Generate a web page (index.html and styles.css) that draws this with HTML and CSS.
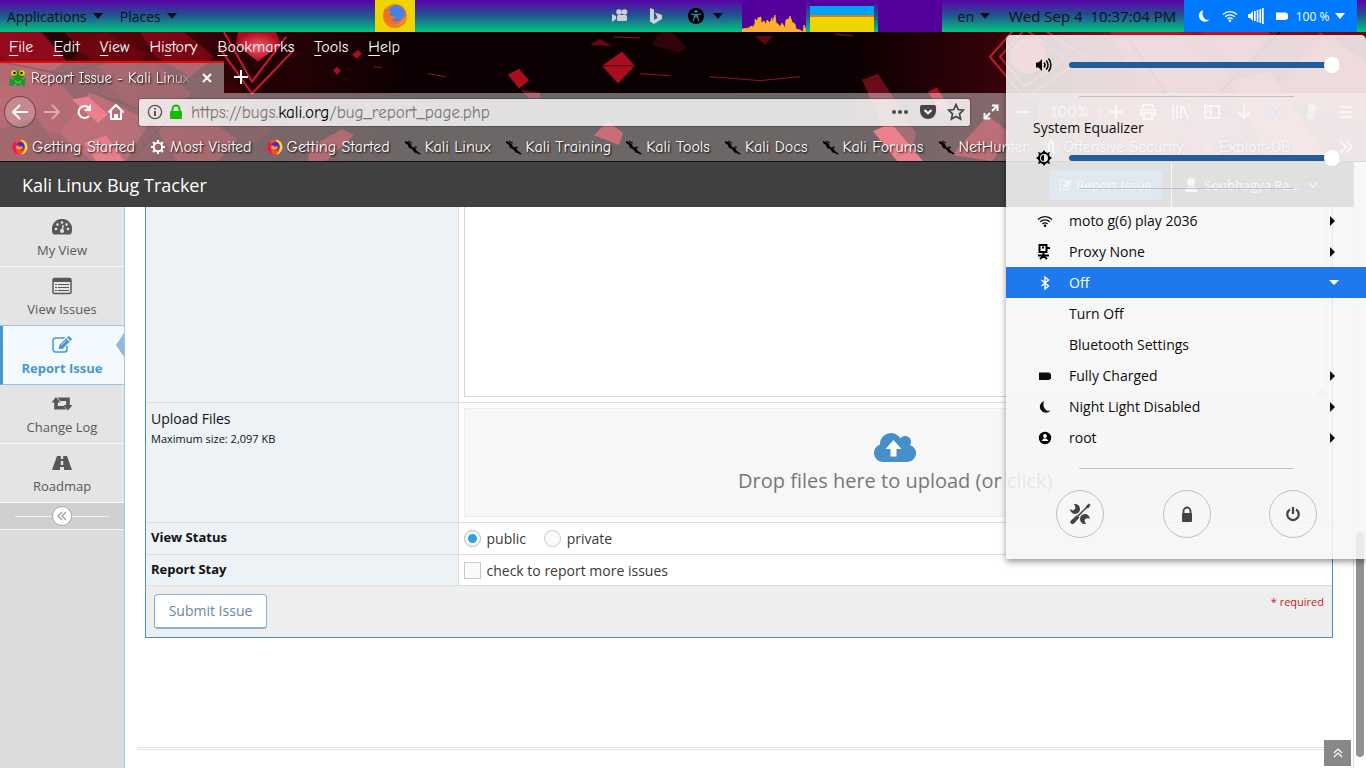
FILE: index.html
```html
<!DOCTYPE html>
<html lang="en">
<head>
  <meta charset="UTF-8" />
  <meta name="viewport" content="width=device-width, initial-scale=1" />
  <title>Report Issue - Kali Linux Bug Tracker</title>
  <link rel="stylesheet" href="styles.css">
</head>
<body>
  <!-- shared icons -->
  <svg class="sprite" aria-hidden="true">
    <symbol id="firefox" viewBox="0 0 16 16">
      <circle cx="8" cy="8" r="7.6" fill="#ff4b1f" />
      <path d="M9 .5a7.6 7.6 0 0 1 6.500 7.500c0 4-3 7-6.500 7.400C13 12 14 8 12 5 11 3 9 3 9 .5z" fill="#ffd43a" />
      <path d="M1 5a7.600 7.600 0 0 0 5 10.400C4 12 3 8 4 4L2.500 2.500z" fill="#f4134f" />
      <circle cx="8.300" cy="7.300" r="4.200" fill="#3b2fd0" />
      <path d="M4 7c2-1 3 0 4 1 1-1 3-1 3 .5C10 11 6 12 4.500 9.500z" fill="#ff9a1a" />
    </symbol>
    <symbol id="dragon" viewBox="0 0 16 16">
      <path d="M0 2l3 1 3 2 1 3 3 1 2 3 4 3-2 .5-3-2-1 .5-3-4-3-1-1-3-3-2z" fill="#000" />
      <path d="M3 2l4 2M9 8l3 .5M5 6l-2 1" stroke="#000" stroke-width="1" />
    </symbol>
    <symbol id="gear" viewBox="0 0 16 16">
      <circle cx="8" cy="8" r="4.200" fill="none" stroke="#fff" stroke-width="2" />
      <path d="M8 1v3M8 12v3M1 8h3M12 8h3M3 3l2 2M11 11l2 2M3 13l2-2M11 5l2-2" stroke="#fff" stroke-width="2" />
    </symbol>
    <symbol id="pencil" viewBox="0 0 20 18">
      <path d="M15 10v3.500a2.500 2.500 0 0 1-2.500 2.500h-9A2.500 2.500 0 0 1 1 13.500v-9A2.500 2.500 0 0 1 3.500 2h9" fill="none" stroke="currentColor" stroke-width="1.500" />
      <path d="M7 13V9.500L14.200 2.300l3.500 3.500L10.500 13z" fill="currentColor" />
      <path d="M15 1.500l1-1a1 1 0 0 1 1.400 0l2.100 2.100a1 1 0 0 1 0 1.400l-1 1z" fill="currentColor" />
      <path d="M9 9.500l5-5" stroke="#fff" stroke-width=".7" />
    </symbol>
    <symbol id="wifi" viewBox="0 0 16 16">
      <g fill="none" stroke="currentColor" stroke-width="1.300">
        <path d="M1 6.500a10 10 0 0 1 14 0" />
        <path d="M3.200 8.800a6.800 6.800 0 0 1 9.600 0" />
        <path d="M5.400 11a3.700 3.700 0 0 1 5.200 0" />
      </g>
      <circle cx="8" cy="12.800" r="1.300" fill="currentColor" />
    </symbol>
    <symbol id="moon" viewBox="0 0 16 16">
      <path d="M7 2a6 6 0 1 0 6.500 9.500C9 13 5 8 7 2z" fill="currentColor" />
    </symbol>
    <symbol id="battery" viewBox="0 0 16 16">
      <path d="M2 4.500h10.500V5.500H14v5.500h-1.500V12H2z" fill="currentColor" />
    </symbol>
  </svg>

  <header class="topbar">
    <button class="top-menu">Applications <i class="caret"></i></button>
    <button class="top-menu">Places <i class="caret"></i></button>
    <button class="launcher" aria-label="Firefox">
      <svg width="26" height="26" viewBox="0 0 26 26">
        <circle cx="13" cy="13" r="12" fill="#f47a1f" />
        <path d="M9 3a11 11 0 0 1 13 15c-3 5-10 6-14 3z" fill="#f7922a" />
        <circle cx="14" cy="11" r="9" fill="#4b7fe0" />
        <path d="M2 6c3 1 5 0 7 3-3 2-1 4 2 4 2 0 3 1 3 2-3 1-5 1-3 3 4 2 9-1 10-5 1 6-5 9-9 9C5 21 1 15 2 6z" fill="#f0702a" />
      </svg>
    </button>
    <div class="tray">
      <svg width="18" height="16" viewBox="0 0 18 16" fill="#cfd0d6">
        <circle cx="8" cy="4" r="2.800" /><circle cx="13.500" cy="4" r="2.800" />
        <rect x="6" y="7" width="10" height="6" rx="1.500" />
        <path d="M1 6l4 2v3l-4 3z" />
      </svg>
      <svg width="14" height="18" viewBox="0 0 14 18" fill="#cfd0d6">
        <path d="M1 1l4 1.500V13l3.500-2L7 7.500 5.800 5.500 13 8v4l-8 5-4-2.500z" />
      </svg>
      <svg class="access" width="16" height="16" viewBox="0 0 16 16">
        <circle cx="8" cy="8" r="8" fill="#000" />
        <circle cx="8" cy="3.500" r="1.500" fill="#3a86a8" />
        <path d="M3 5.800l3.500.7h3l3.500-.7M6.500 6.500V9L5 13.500M9.500 6.500V9l1.500 4.500M7 7h2v2H7z" fill="none" stroke="#3a86a8" stroke-width="1.200" />
      </svg>
      <i class="caret"></i>
    </div>
    <div class="graphs">
      <svg width="64" height="32" viewBox="0 0 64 32">
        <rect width="64" height="32" fill="#54009c" />
        <path d="M0 32v-3l7-1 2-2 2 1 2-3V19l2 2 1-3 3-1v6l3-2 2 4 1-5 3 3 2-5v5l3-8 1 8 2 1 2 3 2-4 3 5 1-8 3-1 1-3 2 6 3 2 1 5 4 1 3 2 1-7 2 5v4z" fill="#ffad33" stroke="#f0d000" stroke-width=".7" />
      </svg>
      <div class="memory"></div>
      <div class="network"></div>
    </div>
    <button class="top-menu lang">en <i class="caret"></i></button>
    <span class="clock">Wed Sep 4 &nbsp;10:37:04 PM</span>
    <button class="status" aria-label="System menu">
      <svg width="16" height="16"><use href="#moon" /></svg>
      <svg width="16" height="16"><use href="#wifi" /></svg>
      <svg width="16" height="16" viewBox="0 0 16 16" fill="#fff">
        <path d="M0 6h2l3-3v10l-3-3H0zM6 3h1.700v10H6zM8.700 2h1.700v12H8.700zM11.400 1h1.700v14h-1.700zM14 0h1.700v16H14z" />
      </svg>
      <svg width="16" height="16"><use href="#battery" /></svg>
      <span>100 %</span>
      <i class="caret"></i>
    </button>
  </header>

  <section class="browser">
    <svg class="wallpaper" viewBox="0 0 1366 130" preserveAspectRatio="none" aria-hidden="true">
      <defs>
        <linearGradient id="night" x1="0" x2="1" y1="0" y2="0">
          <stop offset="0" stop-color="#a3091c" /><stop offset=".1" stop-color="#78040f" />
          <stop offset=".19" stop-color="#2a0206" /><stop offset=".3" stop-color="#0c0002" />
          <stop offset=".62" stop-color="#0a0002" /><stop offset=".73" stop-color="#350309" />
          <stop offset=".85" stop-color="#b01226" /><stop offset="1" stop-color="#6e0511" />
        </linearGradient>
        <linearGradient id="shade" x1="0" x2="1" y1="0" y2="0">
          <stop offset="0" stop-color="#1c0003" stop-opacity=".25" /><stop offset="1" stop-color="#1c0003" stop-opacity=".55" />
        </linearGradient>
        <radialGradient id="lamp"><stop offset="0" stop-color="#ff5a68" /><stop offset="1" stop-color="#a80b20" /></radialGradient>
      </defs>
      <rect width="1366" height="130" fill="url(#night)" />
      <!-- cubes on the left -->
      <path d="M0 0h40l32 34-30 20-42-30z" fill="#bd0e26" />
      <path d="M42 0h22l26 28-16 10z" fill="#2b0207" />
      <path d="M75 10l30-10 42 22-20 24-40-6z" fill="#980817" />
      <path d="M140 0h44l30 25-24 20-34-20z" fill="#c00b21" />
      <path d="M0 55l50-22 40 30-30 40-60-14z" fill="#b50d21" />
      <path d="M50 40l32-20 30 28-28 30z" fill="#6b0510" />
      <path d="M100 48l54-18 38 32-44 28z" fill="#99081a" />
      <path d="M60 102l30-42 60 30-24 40H92z" fill="#ce1830" />
      <path d="M150 86l28-18 60 40-20 22h-42z" fill="#b00d21" />
      <path d="M0 98l36-12 34 44H0z" fill="#7d0512" />
      <path d="M190 62l44-12 40 48-26 18z" fill="#540409" />
      <rect width="290" height="130" fill="url(#shade)" />
      <path d="M72 68l16-3 20 18-10 9z" fill="#e02a40" />
      <path d="M84 112l22-8 18 26h-28z" fill="#d8283e" />
      <path d="M0 30l60 12 50-12M90 60l60 22 70-6M130 130l40-44" stroke="#3a0208" stroke-width="2" fill="none" />
      <path d="M218 14l34 48 42-44M224 0l28 50 34-45" fill="none" stroke="#c81c32" stroke-width="2" />
      <path d="M238 0h38l5 12-23 18-22-18z" fill="url(#lamp)" />
      <!-- loose cubes in the dark -->
      <g fill="#a90d20">
        <path d="M508 43l11-6 10 12-10 8zM602 34l20-14 13 14-17 18z" />
        <path d="M590 13l10-6 12 7z" opacity=".6" /><path d="M520 58l20 3v6h-10z" opacity=".6" />
        <path d="M594 104l14-14 15 12-4 12z" /><path d="M358 18l-6 5 5 4 5-5z" /><path d="M337 35l4 4-4 4-4-4z" />
        <path d="M755 4h18l-8 9z" opacity=".5" /><path d="M660 0l12 0 14 16-8 5-26-8z" opacity=".25" />
        <path d="M310 116l32-18 12 6-28 26h-18z" opacity=".7" />
      </g>
      <path d="M603 34h31" stroke="#3a0208" />
      <path d="M614 5l26 1M640 42l30 2M710 45l50 4 40-4M428 42l18 3M374 35l8 1M835 2l18 2" stroke="#901626" stroke-width="1" fill="none" />
      <!-- cubes on the right -->
      <path d="M862 48l16-6 38 60-6 28h-12z" fill="#6c0c18" />
      <path d="M873 100l18-8 32 38h-26z" fill="#e02c42" />
      <path d="M928 60l9-4 12 20-8 5z" fill="#a30c20" />
      <path d="M990 25l35-40 60 40-60 42zM1000 25l25-28 40 30-40 28z" fill="none" stroke="#c81c32" stroke-width="2" />
      <circle cx="1028" cy="24" r="18" fill="#c41a30" />
      <path d="M952 124l36-40 24 20-20 26z" fill="#900e20" />
      <path d="M1110 0h70l50 46-34 38-70-54zM1200 0h70l-30 40zM1270 66l50-66 46 30v60zM1090 80l50-20 40 60h-50z" fill="#bc142a" />
      <path d="M1230 50l40 80h60l-60-90z" fill="#c82238" />
      <path d="M1130 10l60 84M1280 0l-60 60M1160 60l90 30" stroke="#4a020b" stroke-width="2" />
    </svg>

    <nav class="menubar">
      <button><u>F</u>ile</button>
      <button><u>E</u>dit</button>
      <button><u>V</u>iew</button>
      <button>Hi<u>s</u>tory</button>
      <button><u>B</u>ookmarks</button>
      <button><u>T</u>ools</button>
      <button><u>H</u>elp</button>
    </nav>

    <div class="tabs">
      <div class="tab">
        <svg width="18" height="18" viewBox="0 0 18 18">
          <path d="M1 9l3 2 2-2h6l2 2 3-3-1 9h-3l-1-3-2 3H8l-2-3-2 3H0z" fill="#169b32" />
          <path d="M4 2l10 0 1 6-5 3H7L3 7z" fill="#238c22" />
          <circle cx="5" cy="4" r="2.800" fill="#e6d81c" /><circle cx="13" cy="4" r="2.800" fill="#e6d81c" />
          <circle cx="5.500" cy="4" r="1.200" /><circle cx="12.500" cy="4" r="1.200" />
          <path d="M6 12l3 2 3-2" stroke="#8be04a" fill="none" />
        </svg>
        <span class="tab-title">Report Issue - Kali Linux</span>
        <button class="close" aria-label="Close tab">
          <svg width="12" height="12" viewBox="0 0 12 12"><path d="M2 2l8 8M10 2l-8 8" stroke="#fff" stroke-width="2" /></svg>
        </button>
      </div>
      <button class="new-tab" aria-label="New tab">
        <svg width="14" height="14" viewBox="0 0 14 14"><path d="M7 0v14M0 7h14" stroke="#fff" stroke-width="2" /></svg>
      </button>
    </div>

    <div class="navbar">
      <button class="back" aria-label="Back">
        <svg width="18" height="18" viewBox="0 0 18 18"><path d="M17 9H2M9 2L2 9l7 7" /></svg>
      </button>
      <button class="tool faded" aria-label="Forward">
        <svg width="18" height="18" viewBox="0 0 18 18"><path d="M1 9h15M9 2l7 7-7 7" /></svg>
      </button>
      <button class="tool" aria-label="Reload">
        <svg width="18" height="18" viewBox="0 0 18 18"><path d="M14 13a6 6 0 1 1-1-9" /><path d="M16 1v7H9z" fill="#fff" stroke="none" /></svg>
      </button>
      <button class="tool" aria-label="Home">
        <svg width="18" height="18" viewBox="0 0 18 18"><path d="M1.500 9.500L9 2l7.500 7.500M4 8v8h4v-4h2v4h4V8" /></svg>
      </button>
      <div class="urlbar">
        <svg width="16" height="16" viewBox="0 0 16 16" fill="none" stroke="#555" stroke-width="1.300"><circle cx="8" cy="8" r="6.600" /><path d="M8 7v5M8 4v1.600" stroke-width="2" /></svg>
        <svg width="14" height="16" viewBox="0 0 14 16"><path d="M3.500 8V5a3.500 3.500 0 0 1 7 0v3" fill="none" stroke="#12bc00" stroke-width="2" /><rect x="1" y="7" width="12" height="8" rx="1" fill="#12bc00" /></svg>
        <div class="url">https://bugs.<b>kali.org</b>/bug_report_page.php</div>
        <svg width="18" height="18" viewBox="0 0 18 18" fill="#4a4a4a"><circle cx="3" cy="9" r="2" /><circle cx="9" cy="9" r="2" /><circle cx="15" cy="9" r="2" /></svg>
        <svg width="16" height="16" viewBox="0 0 16 16"><path d="M2 1h12a2 2 0 0 1 2 2v4a8 8 0 0 1-16 0V3a2 2 0 0 1 2-2z" fill="#4a4346" /><path d="M4.500 6L8 9.300 11.500 6" fill="none" stroke="#fff" stroke-width="2" /></svg>
        <svg width="18" height="18" viewBox="0 0 18 18"><path d="M9 1.500l2.200 5 5.300.6-4 3.700 1.100 5.300L9 13.400l-4.600 2.700 1.100-5.300-4-3.700 5.300-.6z" fill="none" stroke="#4a4346" stroke-width="1.700" /></svg>
      </div>
      <button class="tool" aria-label="Full screen">
        <svg width="16" height="16" viewBox="0 0 16 16"><path d="M9 7l5-5M9 1.500h5.500V7M7 9l-5 5M1.500 9v5.500H7" /></svg>
      </button>
      <button class="tool" aria-label="Zoom out"><svg width="14" height="14" viewBox="0 0 14 14"><path d="M1 7h12" /></svg></button>
      <button class="zoom-level">100%</button>
      <button class="tool" aria-label="Zoom in"><svg width="14" height="14" viewBox="0 0 14 14"><path d="M7 0v14M0 7h14" /></svg></button>
      <button class="tool" aria-label="Print">
        <svg width="18" height="18" viewBox="0 0 18 18"><path d="M4 5V2h10v3M4 12H2V7h14v5h-2M5 10h8v6H5z" /></svg>
      </button>
      <button class="tool" aria-label="Library">
        <svg width="18" height="18" viewBox="0 0 18 18"><path d="M2 2v14M6 2v14M10 2v14M12 3l5 13" /></svg>
      </button>
      <button class="tool" aria-label="Sidebars">
        <svg width="18" height="18" viewBox="0 0 18 18"><path d="M2 3h14v12H2zM8 3v12M4 6h2M4 9h2" /></svg>
      </button>
      <button class="tool" aria-label="Downloads">
        <svg width="18" height="18" viewBox="0 0 18 18"><path d="M9 2v13M3 9l6 6 6-6" /></svg>
      </button>
      <button class="tool blue" aria-label="Extension">
        <svg width="18" height="18" viewBox="0 0 18 18"><path d="M4 3l9 13M14 3L4 16" /></svg>
      </button>
      <button class="tool" aria-label="Containers">
        <svg width="18" height="18" viewBox="0 0 18 18"><g stroke="none"><circle cx="5" cy="8" r="4" fill="#777" /><circle cx="13" cy="5" r="4" fill="#ddd" /><circle cx="12" cy="12" r="4.500" fill="#ccc" /></g></svg>
      </button>
      <button class="tool app-menu" aria-label="Menu">
        <svg width="14" height="14" viewBox="0 0 14 14"><path d="M1 2h12M1 7h12M1 12h12" /></svg>
      </button>
    </div>

    <div class="bookmarks">
      <a href="#"><svg width="16" height="16"><use href="#firefox" /></svg>Getting Started</a>
      <a href="#"><svg width="16" height="16"><use href="#gear" /></svg>Most Visited</a>
      <a href="#"><svg width="16" height="16"><use href="#firefox" /></svg>Getting Started</a>
      <a href="#"><svg width="16" height="16"><use href="#dragon" /></svg>Kali Linux</a>
      <a href="#"><svg width="16" height="16"><use href="#dragon" /></svg>Kali Training</a>
      <a href="#"><svg width="16" height="16"><use href="#dragon" /></svg>Kali Tools</a>
      <a href="#"><svg width="16" height="16"><use href="#dragon" /></svg>Kali Docs</a>
      <a href="#"><svg width="16" height="16"><use href="#dragon" /></svg>Kali Forums</a>
      <a href="#"><svg width="16" height="16"><use href="#dragon" /></svg>NetHunter</a>
      <a href="#"><svg width="16" height="16" viewBox="0 0 16 16"><rect width="16" height="16" fill="#888" /><path d="M5 15V5l2-4 2 4v10" fill="none" stroke="#fff" stroke-width="2" /></svg>Offensive Security</a>
      <a href="#"><svg width="16" height="16" viewBox="0 0 16 16"><path d="M2 5l8 3 4 5-8-1z" fill="#f39a3a" /></svg>Exploit-DB</a>
      <button class="more" aria-label="More bookmarks"><svg width="14" height="14" viewBox="0 0 14 14"><path d="M1 1l6 6-6 6M7 1l6 6-6 6" fill="none" stroke="#fff" stroke-width="2" /></svg></button>
    </div>
  </section>

  <div class="viewport">
    <div class="page">
      <header class="site-header">
        <a class="brand" href="#">Kali Linux Bug Tracker</a>
        <a class="report-btn" href="#"><svg width="13" height="12"><use href="#pencil" /></svg> Report Issue</a>
        <button class="user">
          <svg width="14" height="14" viewBox="0 0 14 14" fill="#fff"><circle cx="7" cy="4" r="4" /><path d="M1 14c-1-5 2-6 6-5 4-1 7 0 6 5z" /></svg>
          <span>Soubhagya Ra…</span>
          <svg width="10" height="8" viewBox="0 0 10 8"><path d="M1 2l4 4 4-4" fill="none" stroke="#fff" stroke-width="1.500" /></svg>
        </button>
      </header>

      <div class="content">
        <aside class="sidebar">
          <a href="#">
            <svg width="20" height="18" viewBox="0 0 20 18">
              <path d="M10 1a10 10 0 0 0-8.500 15.500h17A10 10 0 0 0 10 1z" fill="currentColor" />
              <g fill="#e4e4e4"><circle cx="4" cy="11" r="1.300" /><circle cx="5.500" cy="6.500" r="1.300" /><circle cx="10" cy="4.500" r="1.300" /><circle cx="14.500" cy="6.500" r="1.300" /><circle cx="16" cy="11" r="1.300" /><circle cx="10" cy="13" r="2" /></g>
              <path d="M10 13l1.200-6" stroke="#e4e4e4" stroke-width="1.400" />
            </svg>
            My View
          </a>
          <a href="#">
            <svg width="20" height="18" viewBox="0 0 20 18">
              <path d="M1 3a1.500 1.500 0 0 1 1.500-1.500h15A1.500 1.500 0 0 1 19 3v12a1.500 1.500 0 0 1-1.500 1.500h-15A1.500 1.500 0 0 1 1 15z" fill="none" stroke="currentColor" stroke-width="1.500" />
              <path d="M1 2h18v3H1z" fill="currentColor" />
              <path d="M3 7.500h2M6 7.500h11M3 10.500h2M6 10.500h11M3 13.500h2M6 13.500h11" stroke="currentColor" stroke-width="1.200" />
            </svg>
            View Issues
          </a>
          <a href="#" class="active">
            <svg width="20" height="18"><use href="#pencil" /></svg>
            Report Issue
          </a>
          <a href="#">
            <svg width="22" height="18" viewBox="0 0 22 18" fill="currentColor">
              <path d="M5 2l4.500 5.500H6.800V11H13l2.500 3.500H3.200v-7H.5z" />
              <path d="M17 15.500L12.500 10h2.700V6H9L6.500 2.500h12.300V10h2.700z" />
            </svg>
            Change Log
          </a>
          <a href="#">
            <svg width="20" height="18" viewBox="0 0 20 18">
              <path d="M5 2h10l5 14h-8v-3H8v3H0z" fill="currentColor" />
              <path d="M10 2v3M10 7v4" stroke="#e4e4e4" stroke-width="2.400" />
            </svg>
            Roadmap
          </a>
          <div class="collapse">
            <button aria-label="Collapse sidebar">
              <svg width="10" height="10" viewBox="0 0 10 10"><path d="M5 1L1 5l4 4M9 1L5 5l4 4" fill="none" stroke="#999" stroke-width="1.200" /></svg>
            </button>
          </div>
        </aside>

        <main>
          <form class="report-form">
            <table>
              <tr class="info-row">
                <th></th>
                <td><textarea aria-label="Additional information"></textarea></td>
              </tr>
              <tr class="upload-row">
                <th><span class="field-name">Upload Files</span><small>Maximum size: 2,097 KB</small></th>
                <td>
                  <div class="dropzone">
                    <svg width="42" height="32" viewBox="0 0 42 32">
                      <path d="M9 31A9 9 0 0 1 6 13.500 11 11 0 0 1 26.500 7.500 5.500 5.500 0 0 1 36 14a8.700 8.700 0 0 1-2.500 17z" fill="#478fca" />
                      <path d="M19.500 9l8 9h-5v7.500h-6V18h-5z" fill="#fff" />
                    </svg>
                    <span>Drop files here to upload (or click)</span>
                  </div>
                </td>
              </tr>
              <tr>
                <th>View Status</th>
                <td>
                  <label><input type="radio" name="view_state" checked /><span>public</span></label>
                  <label><input type="radio" name="view_state" /><span>private</span></label>
                </td>
              </tr>
              <tr>
                <th>Report Stay</th>
                <td><label><input type="checkbox" name="report_stay" /><span>check to report more issues</span></label></td>
              </tr>
            </table>
            <div class="toolbox">
              <button type="submit">Submit Issue</button>
              <span class="required">* required</span>
            </div>
          </form>
          <footer></footer>
          <a class="scroll-up" href="#" aria-label="Back to top">
            <svg width="10" height="10" viewBox="0 0 10 10"><path d="M1 5l4-4 4 4M1 9l4-4 4 4" fill="none" stroke="#fff" stroke-width="1.200" /></svg>
          </a>
        </main>
      </div>
    </div>
    <div class="scrollbar"><div class="thumb"></div></div>
  </div>

  <section class="system-menu">
    <div class="slider volume">
      <svg width="16" height="16" viewBox="0 0 16 16"><path d="M0 5.500h2.500L6 2v12l-3.500-3.500H0z" /><path d="M8 5.500a4 4 0 0 1 0 5M10.200 3.500a6.500 6.500 0 0 1 0 9M12.500 1.500a10 10 0 0 1 0 13" fill="none" stroke="#000" stroke-width="1.500" /></svg>
      <input type="range" value="100" aria-label="Volume" />
    </div>
    <hr />
    <button class="equalizer">System Equalizer</button>
    <div class="slider">
      <svg width="16" height="16" viewBox="0 0 16 16"><circle cx="8" cy="8" r="5" fill="none" stroke="#000" stroke-width="2" /><path d="M8 5a3 3 0 0 0 0 6z" /><path d="M8 0l2 3H6zM8 16l2-3H6zM0 8l3-2v4zM16 8l-3-2v4zM2 2l3 1-2 2zM14 2l-3 1 2 2zM2 14l3-1-2-2zM14 14l-3-1 2-2z" /></svg>
      <input type="range" value="100" aria-label="Brightness" />
    </div>
    <hr />
    <ul>
      <li><button><svg width="16" height="16"><use href="#wifi" /></svg>moto g(6) play 2036<i class="arrow"></i></button></li>
      <li><button><svg width="16" height="16" viewBox="0 0 16 16"><path d="M2.500 1h7v7h-7zM10 4h3M5 3.500h2" fill="none" stroke="#000" stroke-width="2" /><path d="M1 11.500h11M3 15l3.500-3 3.500 3M6.500 8v4" fill="none" stroke="#000" stroke-width="2" /></svg>Proxy None<i class="arrow"></i></button></li>
      <li><button class="selected"><svg width="16" height="16" viewBox="0 0 16 16"><path d="M4.500 5l7 6L8 14V2l3.500 3-7 6" fill="none" stroke="#fff" stroke-width="1.400" /></svg>Off<i class="arrow"></i></button></li>
      <li><button class="sub">Turn Off</button></li>
      <li><button class="sub">Bluetooth Settings</button></li>
      <li><button><svg width="16" height="16"><use href="#battery" /></svg>Fully Charged<i class="arrow"></i></button></li>
      <li><button><svg width="16" height="16"><use href="#moon" /></svg>Night Light Disabled<i class="arrow"></i></button></li>
      <li><button><svg width="16" height="16" viewBox="0 0 16 16"><circle cx="8" cy="8" r="6.200" /><circle cx="8" cy="6" r="1.900" fill="#fff" /><path d="M4.500 11l2-2.500h3l2 2.500z" fill="#fff" /></svg>root<i class="arrow"></i></button></li>
    </ul>
    <hr />
    <div class="actions">
      <button aria-label="Settings">
        <svg width="22" height="22" viewBox="0 0 22 22">
          <path d="M6 6l10 10" stroke="#444" stroke-width="2.500" />
          <path d="M5 1a5 5 0 1 1-4 5l3 1.500L6.500 6 6 3zM21 16a5 5 0 1 0-4 5l-1.500-3 1-2.500 3-.3z" fill="#444" />
          <path d="M10 12L19 3" stroke="#f7f7f7" stroke-width="4" />
          <path d="M9 13L19 3" stroke="#444" stroke-width="1.500" />
          <path d="M2 20.500q-1.500-1.500 0-3L8 12l2.500 2.500-5.500 6q-1.500 1-3 0zM17 3l3-2.500L21.500 2 19.500 5l-2 .5z" fill="#444" />
        </svg>
      </button>
      <button aria-label="Lock">
        <svg width="14" height="16" viewBox="0 0 14 16"><path d="M3.500 8V5a3.500 3.500 0 0 1 7 0v3" fill="none" stroke="#444" stroke-width="1.800" /><rect x="2" y="7" width="10" height="9" rx="1" fill="#444" /></svg>
      </button>
      <button aria-label="Power off">
        <svg width="16" height="16" viewBox="0 0 16 16"><path d="M5 3.500a5.700 5.700 0 1 0 6 0M8 1v7" fill="none" stroke="#444" stroke-width="2.200" /></svg>
      </button>
    </div>
  </section>
</body>
</html>
```
FILE: styles.css
```css
* {
  box-sizing: border-box;
}

body {
  margin: 0;
  height: 100vh;
  display: flex;
  flex-direction: column;
  overflow: hidden;
  position: relative;
  font-family: "Open Sans", "Noto Sans", sans-serif;
  font-size: 14px;
  color: #393939;
  background: #fff;
}

button {
  font: inherit;
  color: inherit;
  background: none;
  border: 0;
  padding: 0;
  cursor: pointer;
}

a {
  color: inherit;
  text-decoration: none;
}

svg {
  display: block;
  flex: none;
}

.sprite {
  position: absolute;
  width: 0;
  height: 0;
}

.caret {
  width: 0;
  height: 0;
  border: 5px solid transparent;
  border-top: 6px solid currentColor;
  border-bottom: 0;
}

/* desktop bar */
.topbar {
  height: 32px;
  flex: none;
  display: flex;
  align-items: center;
  color: #0b1016;
  background: linear-gradient(#5a00a8, #20588e 50%, #00c883);
  white-space: nowrap;
}

.top-menu {
  display: flex;
  align-items: center;
  gap: 6px;
  margin-left: 7px;
  margin-right: 10px;
}

.launcher {
  width: 40px;
  height: 32px;
  margin-left: 188px;
  display: flex;
  align-items: center;
  justify-content: center;
  background: #efd500;
}

.tray {
  display: flex;
  align-items: center;
  margin-left: auto;
  gap: 20px;
}

.tray .access {
  margin-left: 5px;
}

.tray .caret {
  margin-left: -11px;
}

.graphs {
  display: flex;
  gap: 4px;
  margin-left: 19px;
}

.memory,
.network {
  width: 64px;
  height: 32px;
  background: #54009c;
}

.memory {
  background: linear-gradient(#54009c 6px, #00a2ff 6px, #00a2ff 15px, #e07818 15px, #e07818 17px, #efd500 17px);
}

.lang {
  margin-left: 16px;
  margin-right: 19px;
}

.clock {
  width: 167px;
  font-size: 15px;
}

.status {
  height: 32px;
  width: 173px;
  margin: 0 9px 0 8px;
  display: flex;
  align-items: center;
  justify-content: center;
  gap: 10px;
  color: #fff;
  font-size: 12px;
  background: #007aff;
}

.status span,
.status .caret {
  margin-left: -4px;
}

/* browser window */
.browser {
  position: relative;
  flex: none;
  height: 130px;
  border-bottom: 1px solid #111;
  color: #fff;
  font-family: "Comic Neue", Lato, "Open Sans", sans-serif;
  font-size: 16px;
  text-shadow: 1px 1px 2px #000;
  overflow: hidden;
}

.wallpaper {
  position: absolute;
  inset: 0;
  width: 100%;
  height: 100%;
}

.menubar,
.tabs,
.navbar,
.bookmarks {
  position: relative;
  display: flex;
  align-items: center;
}

.menubar {
  height: 29px;
  padding-left: 9px;
  gap: 20px;
}

.menubar u {
  text-underline-offset: 3px;
}

.tabs {
  height: 32px;
}

.tab {
  width: 224px;
  height: 32px;
  padding: 0 11px 0 9px;
  display: flex;
  align-items: center;
  gap: 4px;
  border-top: 2px solid #f00;
  background: rgba(255, 255, 255, 0.4);
}

.tab-title {
  flex: 1;
  font-size: 15px;
  overflow: hidden;
  white-space: nowrap;
  -webkit-mask-image: linear-gradient(90deg, #000 80%, transparent);
  mask-image: linear-gradient(90deg, #000 80%, transparent);
}

.new-tab {
  margin-left: 10px;
}

.navbar {
  height: 38px;
  padding: 0 4px;
  background: rgba(255, 255, 255, 0.4);
}

.navbar button svg {
  fill: none;
  stroke: #fff;
  stroke-width: 2;
}

.back {
  width: 32px;
  height: 32px;
  border-radius: 50%;
  border: 1px solid rgba(50, 30, 30, 0.6);
  background: rgba(255, 255, 255, 0.2);
}

.back,
.tool {
  flex: none;
  display: flex;
  align-items: center;
  justify-content: center;
}

.tool {
  width: 32px;
}

.faded {
  opacity: 0.45;
}

.navbar .blue svg {
  stroke: #3584e4;
}

.urlbar {
  flex: 1;
  min-width: 0;
  height: 29px;
  margin: 0 4px 0 6px;
  padding: 0 5px 0 8px;
  display: flex;
  align-items: center;
  gap: 6px;
  border-radius: 3px;
  border: 1px solid rgba(60, 50, 50, 0.4);
  background: rgba(255, 255, 255, 0.8);
  background-clip: padding-box;
  color: #777;
  font-size: 17px;
  text-shadow: none;
}

.urlbar .url {
  flex: 1;
  margin-left: 2px;
}

.urlbar svg:nth-last-child(-n+2) {
  margin-left: 5px;
}

.url b {
  color: #000;
  font-weight: normal;
}

.zoom-level {
  width: 61px;
  border: 1px solid rgba(255, 255, 255, 0.3);
  border-width: 0 1px;
}

.app-menu {
  margin-left: 6px;
}

.bookmarks {
  height: 31px;
  padding-left: 12px;
  gap: 15px;
  white-space: nowrap;
  background: rgba(255, 255, 255, 0.4);
}

.bookmarks a {
  display: flex;
  align-items: center;
  gap: 4px;
}

.bookmarks .more {
  margin-left: auto;
  margin-right: 13px;
}

/* page */
.viewport {
  flex: 1;
  min-height: 0;
  display: flex;
}

.page {
  flex: 1;
  min-width: 0;
  display: flex;
  flex-direction: column;
}

.site-header {
  height: 45px;
  flex: none;
  display: flex;
  align-items: center;
  background: #404040;
  color: #fff;
  font-size: 13px;
}

.brand {
  margin-left: 22px;
  margin-right: auto;
  font-size: 18px;
}

.report-btn {
  width: 113px;
  height: 30px;
  margin-right: 9px;
  display: flex;
  align-items: center;
  justify-content: center;
  gap: 4px;
  border-radius: 4px;
  background: #428bca;
}

.user {
  width: 183px;
  height: 45px;
  padding: 0 12px;
  display: flex;
  align-items: center;
  gap: 6px;
  border-left: 1px solid #fff;
}

.user span {
  flex: 1;
  text-align: left;
}

.user svg:last-child {
  margin-right: 24px;
}

.content {
  flex: 1;
  min-height: 0;
  display: flex;
}

.sidebar {
  width: 125px;
  flex: none;
  background: #dcdcdc;
  border-right: 1px solid #a2c8e2;
  border-top: 1px solid #e8e8e8;
}

.sidebar a {
  position: relative;
  height: 59px;
  padding-top: 10px;
  display: flex;
  flex-direction: column;
  align-items: center;
  font-size: 13px;
  line-height: 24px;
  gap: 2px;
  color: #585858;
  background: #e4e4e4;
  border-bottom: 1px solid #f8f8f8;
}

.sidebar .active {
  color: #4b96cf;
  font-weight: 700;
  background: #f2f9ff;
  border-left: 3px solid #4b96cf;
  border-bottom-color: #9cc4e0;
  padding-right: 3px;
  box-shadow: 0 -1px #9cc4e0;
}

.active::after {
  content: "";
  position: absolute;
  right: 0;
  top: 7px;
  border: 12px solid transparent;
  border-width: 12px 8px 12px 0;
  border-right-color: #8fbbd9;
}

.collapse {
  height: 27px;
  padding: 0 15px;
  display: flex;
  align-items: center;
  background: #d0d0d0;
  border-bottom: 1px solid #f4f4f4;
}

.collapse::before,
.collapse::after {
  content: "";
  flex: 1;
  height: 1px;
  background: #efefef;
}

.collapse button {
  width: 20px;
  height: 20px;
  display: flex;
  align-items: center;
  justify-content: center;
  background: #fff;
  border: 1px solid #aaa;
  border-radius: 50%;
}

main {
  position: relative;
  flex: 1;
  min-width: 0;
  display: flex;
  flex-direction: column;
  padding: 0 12px;
  border-right: 1px solid #ddd;
}

.report-form {
  margin: 0 8px;
  border: 1px solid #478fca;
  border-top: 0;
}

table {
  width: 100%;
  border-collapse: collapse;
  table-layout: fixed;
}

th,
td {
  border-bottom: 1px solid #ddd;
  padding: 0 5px;
  text-align: left;
  height: 32px;
}

th {
  width: 312px;
  color: #111;
  font-size: 13px;
  font-weight: 700;
  line-height: 20px;
  vertical-align: top;
  padding-top: 4px;
  background: #ecf2f5;
  border-right: 1px solid #ddd;
}

tr:last-child th,
tr:last-child td {
  height: 31px;
}

.info-row td {
  height: 195px;
  vertical-align: top;
}

textarea {
  display: block;
  width: 100%;
  height: 190px;
  border: 1px solid #d5d5d5;
  border-top: 0;
}

.upload-row th,
.upload-row td {
  height: 120px;
  padding-top: 5px;
}

.upload-row th {
  padding-top: 6px;
}

.field-name,
small {
  display: block;
  font-weight: normal;
}

.field-name {
  font-size: 14px;
}

small {
  font-size: 11px;
}

.upload-row td {
  vertical-align: top;
}

.dropzone {
  height: 109px;
  display: flex;
  flex-direction: column;
  align-items: center;
  justify-content: center;
  padding-top: 6px;
  border: 1px solid #eee;
  background: #f7f7f7;
  color: #777;
  font-size: 20px;
  line-height: 36px;
}

td label {
  display: inline-flex;
  align-items: center;
  gap: 6px;
  margin-right: 14px;
  vertical-align: middle;
}

input[type="radio"],
input[type="checkbox"] {
  appearance: none;
  width: 17px;
  height: 17px;
  margin: 0;
  border: 1px solid #c8c8c8;
  background: #fafafa;
}

input[type="radio"] {
  border-radius: 50%;
}

input[type="radio"]:checked {
  border-color: #a9bccb;
  background: radial-gradient(circle, #32a3ce 4px, #f5f9fc 5px);
}

.toolbox {
  height: 51px;
  padding: 8px;
  display: flex;
  justify-content: space-between;
  background: #eee;
}

.toolbox button {
  width: 113px;
  height: 35px;
  color: #6688a6;
  background: #fff;
  border: 1px solid #8ab0d2;
  border-bottom-width: 2px;
  border-radius: 4px;
}

.required {
  color: #c11b1b;
  font-size: 11px;
}

footer {
  margin-top: auto;
  height: 21px;
  border-top: 3px double #e2e2e2;
}

.scroll-up {
  position: absolute;
  right: 2px;
  bottom: 2px;
  width: 27px;
  height: 26px;
  display: flex;
  align-items: center;
  justify-content: center;
  background: #888;
}

.scrollbar {
  width: 12px;
  flex: none;
  display: flex;
  flex-direction: column;
  justify-content: flex-end;
  padding: 0 2px 11px;
}

.thumb {
  height: 38%;
  border-radius: 4px;
  background: #929292;
}

/* system menu over the window */
.system-menu {
  position: absolute;
  top: 35px;
  right: 0;
  width: 360px;
  color: #0d0d0d;
  background: rgba(246, 246, 246, 0.88);
  border-radius: 5px 5px 2px 2px;
  box-shadow: 0 3px 6px rgba(0, 0, 0, 0.4);
}

.system-menu hr {
  width: 215px;
  height: 1px;
  margin: 15px auto;
  border: 0;
  background: #c2c0c0;
}

.slider {
  height: 31px;
  padding: 0 26px 0 30px;
  display: flex;
  align-items: center;
  gap: 17px;
}

.slider.volume {
  padding-top: 14px;
  height: 46px;
}

.slider input {
  flex: 1;
  min-width: 0;
  margin: 0;
  appearance: none;
  height: 6px;
  border-radius: 3px;
  background: #215d9c;
}

.slider input::-webkit-slider-thumb {
  appearance: none;
  width: 16px;
  height: 16px;
  border-radius: 50%;
  background: #fff;
}

.equalizer {
  display: block;
  height: 30px;
  padding-left: 27px;
}

.system-menu ul {
  margin: 0;
  padding: 1px 0 0;
  list-style: none;
}

.system-menu li button {
  width: 100%;
  height: 31px;
  padding: 0 30px 0 31px;
  display: flex;
  align-items: center;
  gap: 16px;
}

.system-menu li .sub {
  padding-left: 63px;
}

.system-menu .selected {
  color: #fff;
  background: #1d79ec;
}

.arrow {
  margin-left: auto;
  border: 5px solid transparent;
  border-left-color: currentColor;
  border-right: 0;
  margin-right: 1px;
}

.selected .arrow {
  border: 5px solid transparent;
  border-top-color: currentColor;
  border-bottom: 0;
  margin-right: -3px;
}

.actions {
  display: flex;
  justify-content: space-between;
  padding: 6px 49px 21px 50px;
}

.actions button {
  width: 48px;
  height: 48px;
  display: flex;
  align-items: center;
  justify-content: center;
  border: 1px solid #c0c0c0;
  border-radius: 50%;
}
```
